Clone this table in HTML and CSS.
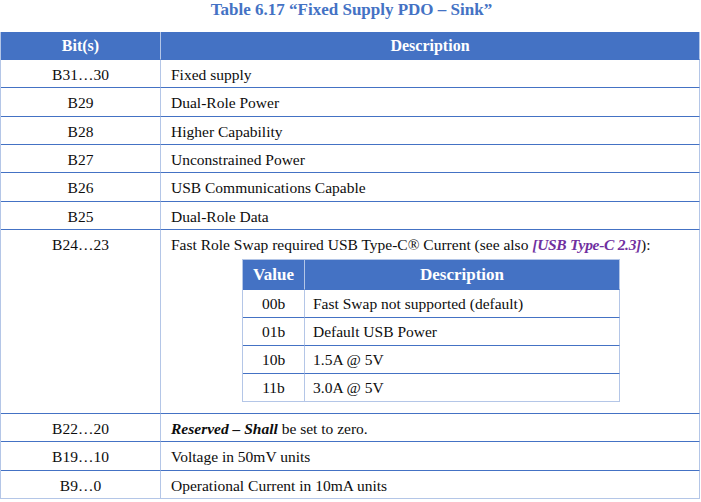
FILE: index.html
```html
<!DOCTYPE html>
<html>
<head>
<meta charset="utf-8">
<link rel="stylesheet" href="styles.css">
</head>
<body>
<div class="caption">Table 6.17 “Fixed Supply PDO – Sink”</div>
<table class="spec">
  <thead>
    <tr class="head-row">
      <th class="hc bit">Bit(s)</th>
      <th class="hc desc">Description</th>
    </tr>
  </thead>
  <tbody>
    <tr class="row"><td class="oc bit">B31…30</td><td class="oc desc">Fixed supply</td></tr>
    <tr class="row"><td class="oc bit">B29</td><td class="oc desc">Dual-Role Power</td></tr>
    <tr class="row"><td class="oc bit">B28</td><td class="oc desc">Higher Capability</td></tr>
    <tr class="row"><td class="oc bit">B27</td><td class="oc desc">Unconstrained Power</td></tr>
    <tr class="row"><td class="oc bit">B26</td><td class="oc desc">USB Communications Capable</td></tr>
    <tr class="row"><td class="oc bit">B25</td><td class="oc desc">Dual-Role Data</td></tr>
    <tr class="row-big">
      <td class="oc bit">B24…23</td>
      <td class="oc desc big">
        <div class="line">Fast Role Swap required USB Type-C® Current (see also <span class="ref">[USB Type-C 2.3]</span>):</div>
        <table class="inner">
          <thead>
            <tr class="ihead"><th class="ic ival">Value</th><th class="ic idesc">Description</th></tr>
          </thead>
          <tbody>
            <tr class="irow"><td class="ic ival">00b</td><td class="ic idesc">Fast Swap not supported (default)</td></tr>
            <tr class="irow"><td class="ic ival">01b</td><td class="ic idesc">Default USB Power</td></tr>
            <tr class="irow"><td class="ic ival">10b</td><td class="ic idesc">1.5A @ 5V</td></tr>
            <tr class="irow"><td class="ic ival ilast">11b</td><td class="ic idesc ilast">3.0A @ 5V</td></tr>
          </tbody>
        </table>
      </td>
    </tr>
    <tr class="row"><td class="oc bit">B22…20</td><td class="oc desc"><b><i>Reserved – Shall</i></b> be set to zero.</td></tr>
    <tr class="row"><td class="oc bit">B19…10</td><td class="oc desc">Voltage in 50mV units</td></tr>
    <tr class="row"><td class="oc bit olast">B9…0</td><td class="oc desc olast">Operational Current in 10mA units</td></tr>
  </tbody>
</table>
</body>
</html>
```
FILE: styles.css
```css
html, body {
  margin: 0;
  padding: 0;
  background: #ffffff;
}
body {
  font-family: "Liberation Serif", "Times New Roman", serif;
  color: #0d0d0d;
  width: 701px;
}
.caption {
  height: 32px;
  line-height: 19px;
  font-size: 17px;
  font-weight: bold;
  color: #4472c4;
  text-align: center;
  padding-left: 2px;
  box-sizing: border-box;
}
.spec {
  width: 700px;
  table-layout: fixed;
  border-collapse: separate;
  border-spacing: 0;
  border-left: 1px solid #b4c6e7;
  font-size: 15.5px;
  line-height: 18px;
}
.hc {
  background: #4472c4;
  color: #ffffff;
  font-size: 16px;
  font-weight: bold;
  vertical-align: middle;
  text-align: center;
  padding: 1px 10px 0 10px;
  border-right: 1px solid #b4c6e7;
  border-bottom: 1px solid #4472c4;
  box-sizing: border-box;
}
.head-row {
  height: 28px;
}
.oc {
  border-right: 1px solid #b4c6e7;
  border-bottom: 1px solid #4472c4;
  padding: 6px 10px 0 10px;
  vertical-align: top;
  box-sizing: border-box;
}
.bit {
  width: 160px;
  text-align: center;
}
.oc.desc {
  text-align: left;
}
.oc.olast {
  border-bottom-color: #b4c6e7;
}
.row {
  height: 28.33px;
}
.oc.big {
  padding-bottom: 11px;
}
.ref {
  color: #7030a0;
  font-weight: bold;
  font-style: italic;
  letter-spacing: -0.3px;
}
.inner {
  width: 378px;
  margin: 5px auto 0 auto;
  border-collapse: separate;
  border-spacing: 0;
  border-left: 1px solid #b4c6e7;
  table-layout: fixed;
  position: relative;
  left: 1px;
}
.ic {
  border-right: 1px solid #b4c6e7;
  border-bottom: 1px solid #4472c4;
  padding: 1px 8px 0 8px;
  box-sizing: border-box;
  vertical-align: middle;
  text-align: left;
}
.ic.ival {
  width: 62px;
  text-align: center;
}
.ic.ilast {
  border-bottom-color: #b4c6e7;
}
.ihead {
  height: 31px;
}
.ihead .ic {
  background: #4472c4;
  color: #ffffff;
  font-size: 17px;
  font-weight: bold;
  text-align: center;
  border-top: 1px solid #b4c6e7;
}
.irow {
  height: 28px;
}
```
